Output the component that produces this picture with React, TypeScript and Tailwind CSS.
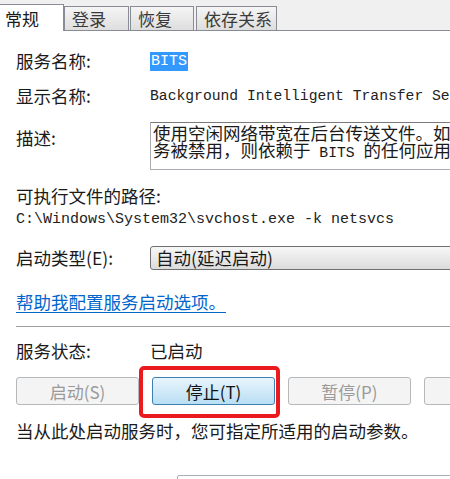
import React from "react";

const cjk = "font-['Noto_Sans_CJK_SC','Noto_Sans',sans-serif]";
const mono = "font-['Liberation_Mono','Noto_Sans_CJK_SC',monospace]";

function Tab({ label, width, active }: { label: string; width: string; active?: boolean }) {
  if (active) {
    return (
      <div
        className={`${width} relative top-[1px] flex h-[27px] shrink-0 items-center border-r border-t border-[#898c95] bg-white pl-[5px] text-[17px] leading-none text-[#1a1a1a]`}
      >
        {label}
      </div>
    );
  }
  return (
    <div
      className={`${width} flex h-[24px] shrink-0 items-center border border-b-0 border-[#898c95] bg-gradient-to-b from-[#f5f5f5] to-[#dedede] pl-[7px] text-[17px] leading-none text-[#3a3a3a]`}
    >
      {label}
    </div>
  );
}

function Btn({ label, primary }: { label: string; primary?: boolean }) {
  if (primary) {
    return (
      <div className="relative w-[123px] shrink-0">
        <div className="flex h-[28px] items-center justify-center rounded-[3px] border border-[#3c7fb1] bg-gradient-to-b from-[#e9f5fc] to-[#b9def4] text-[17px] leading-none text-[#111]">
          {label}
        </div>
        <div className="absolute left-[-13px] top-[-11px] h-[52px] w-[141px] rounded-[5px] border-[4px] border-[#ea1a1f]" />
      </div>
    );
  }
  return (
    <div className="flex h-[28px] w-[123px] shrink-0 items-center justify-center rounded-[3px] border border-[#b5b8bb] bg-[#f4f4f4] text-[17px] leading-none text-[#9a9a9a]">
      {label}
    </div>
  );
}

export default function App() {
  return (
    <div className={`${cjk} relative h-[479px] w-[450px] overflow-hidden bg-white text-[#1a1a1a]`}>
      {/* tab strip */}
      <div className="flex h-[31px] items-end border-b border-[#898c95] bg-[#f0f0f0]">
        <Tab label="常规" width="w-[64px]" active />
        <Tab label="登录" width="w-[65px]" />
        <div className="w-[1px] shrink-0" />
        <Tab label="恢复" width="w-[64px]" />
        <div className="w-[2px] shrink-0" />
        <Tab label="依存关系" width="w-[81px]" />
      </div>

      <div className="pl-[16px]">
        <div className="mt-[19px] flex h-[22px] items-center">
          <div className="w-[134px] shrink-0 text-[17.5px]">服务名称:</div>
          <span className={`${mono} bg-[#3399ff] px-[1px] text-[15px] leading-[19px] text-white`}>BITS</span>
        </div>

        <div className="mt-[13px] flex h-[22px] items-center overflow-hidden">
          <div className="w-[134px] shrink-0 text-[17.5px]">显示名称:</div>
          <span className={`${mono} whitespace-nowrap text-[14.7px] text-[#222]`}>
            Background Intelligent Transfer Se
          </span>
        </div>

        <div className="mt-[15px] flex items-start">
          <div className="mt-[5px] w-[134px] shrink-0 text-[17.5px] leading-[22px]">描述:</div>
          <div className="h-[48px] w-[320px] shrink-0 overflow-hidden border border-[#abadb3] border-t-[#7a7a7a] pl-[2px] pt-[1px] text-[17.5px] leading-[17px] text-[#1a1a1a]">
            <div className="whitespace-nowrap">使用空闲网络带宽在后台传送文件。如</div>
            <div className="whitespace-nowrap">
              务被禁用，则依赖于<span className={`${mono} text-[14.7px]`}> BITS </span>的任何应用
            </div>
          </div>
        </div>

        <div className="mt-[15px] flex h-[22px] items-center text-[17.5px]">可执行文件的路径:</div>
        <div className={`${mono} mt-[2px] flex h-[22px] items-center whitespace-nowrap text-[15px] text-[#222]`}>
          C:\Windows\System32\svchost.exe -k netsvcs
        </div>

        <div className="mt-[14px] flex items-center">
          <div className="w-[134px] shrink-0 text-[17.5px]">启动类型(E):</div>
          <div className="flex h-[24px] w-[320px] shrink-0 items-center rounded-[3px] border border-[#707070] bg-gradient-to-b from-[#f7f7f7] to-[#dcdcdc] pl-[5px] text-[17.5px] leading-none">
            自动(延迟启动)
          </div>
        </div>

        <div className="mt-[20px] flex h-[22px] items-center">
          <span className="text-[17.5px] text-[#0066cc] underline decoration-[#0066cc] underline-offset-[3px]">
            帮助我配置服务启动选项。
          </span>
        </div>

        <div className="mt-[13px] h-[1px] bg-[#a0a0a0]" />

        <div className="mt-[13px] flex h-[22px] items-center">
          <div className="w-[134px] shrink-0 text-[17.5px]">服务状态:</div>
          <div className="text-[17.5px]">已启动</div>
        </div>

        <div className="mt-[15px] flex gap-[13px]">
          <Btn label="启动(S)" />
          <Btn label="停止(T)" primary />
          <Btn label="暂停(P)" />
          <Btn label="" />
        </div>

        <div className="mt-[15px] flex h-[22px] items-center whitespace-nowrap text-[17.5px]">
          当从此处启动服务时，您可指定所适用的启动参数。
        </div>

        <div className="ml-[161px] mt-[33px] h-[30px] w-[300px] shrink-0 rounded-[2px] border border-[#abadb3]" />
      </div>
    </div>
  );
}
